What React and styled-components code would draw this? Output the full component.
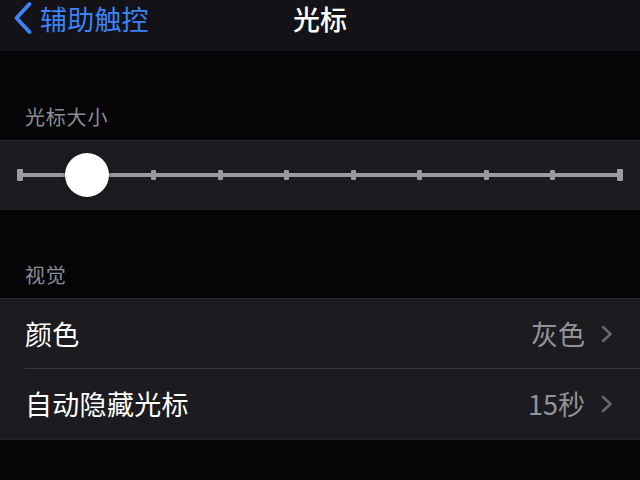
import React from "react";
import styled, { createGlobalStyle } from "styled-components";

const Global = createGlobalStyle`
  html, body { margin: 0; padding: 0; background: #050407; }
  body { font-family: "Noto Sans CJK SC", "Noto Sans", sans-serif; }
  * { box-sizing: border-box; }
`;

const Page = styled.div`
  width: 640px;
  height: 480px;
  background: #050407;
  overflow: hidden;
`;

const NavBar = styled.div`
  position: relative;
  height: 51px;
  background: #131216;
  display: flex;
  align-items: flex-start;
`;

const BackButton = styled.div`
  display: flex;
  align-items: flex-start;
  gap: 6px;
  padding-left: 12px;
  color: #3b83f6;
  font-size: 27px;
  line-height: 38px;
  letter-spacing: 0.2px;
  svg { margin-top: 1px; }
`;

const NavTitle = styled.div`
  position: absolute;
  left: 0;
  right: 0;
  top: 0;
  text-align: center;
  color: #ffffff;
  font-size: 27px;
  font-weight: 500;
  line-height: 38px;
  pointer-events: none;
`;

const SectionHeader = styled.div`
  height: ${(p) => p.$h || 88}px;
  padding: ${(p) => (p.$h || 88) - 34}px 0 0 25px;
  color: #8d8c92;
  font-size: 20px;
  line-height: 22px;
  letter-spacing: 0.8px;
`;

const Group = styled.div`
  background: #1c1b1f;
  border-top: 1px solid #2a292e;
  border-bottom: 1px solid #232227;
`;

const SliderWrap = styled.div`
  height: 68px;
  padding: 0 17px;
  display: flex;
  align-items: center;
`;

const Track = styled.div`
  position: relative;
  flex: 1;
  height: 12px;
  display: flex;
  align-items: center;
  justify-content: space-between;
  &::before {
    content: "";
    position: absolute;
    left: 2px;
    right: 2px;
    top: 4px;
    height: 4px;
    background: #9b9a9f;
  }
`;

const Tick = styled.div`
  position: relative;
  width: ${(p) => (p.$end ? 6 : 5)}px;
  height: ${(p) => (p.$end ? 12 : 10)}px;
  background: #9b9a9f;
  border-radius: 1px;
`;

const Thumb = styled.div`
  position: absolute;
  left: ${(p) => p.$left}px;
  top: 50%;
  width: 44px;
  height: 44px;
  margin-left: -22px;
  margin-top: -22px;
  border-radius: 50%;
  background: #ffffff;
  box-shadow: 0 1px 4px rgba(0, 0, 0, 0.4);
`;

const Row = styled.div`
  padding-left: 25px;
`;

const RowInner = styled.div`
  height: 70px;
  display: flex;
  align-items: center;
  justify-content: space-between;
  padding-right: 27px;
  border-bottom: ${(p) => (p.$last ? "none" : "1px solid #38373c")};
`;

const Label = styled.div`
  color: #ffffff;
  font-size: 27px;
  line-height: 30px;
  letter-spacing: 0.3px;
`;

const Value = styled.div`
  display: flex;
  align-items: center;
  gap: 16px;
  color: #949399;
  font-size: 27px;
  line-height: 30px;
`;

const Chevron = () => (
  <svg width="12" height="18" viewBox="0 0 12 18">
    <path d="M2 2 L9.5 9 L2 16" fill="none" stroke="#68676c" strokeWidth="2.6" strokeLinecap="round" strokeLinejoin="round" />
  </svg>
);

const BackChevron = () => (
  <svg width="22" height="34" viewBox="0 0 22 34">
    <path d="M17.5 3 L4.5 17 L17.5 31" fill="none" stroke="#3b83f6" strokeWidth="4" strokeLinecap="round" strokeLinejoin="round" />
  </svg>
);

const ticks = Array.from({ length: 10 }, (_, i) => i);

export default function App() {
  return (
    <Page>
      <Global />
      <NavBar>
        <BackButton>
          <BackChevron />
          <span>辅助触控</span>
        </BackButton>
        <NavTitle>光标</NavTitle>
      </NavBar>

      <SectionHeader $h={89}>光标大小</SectionHeader>
      <Group>
        <SliderWrap>
          <Track>
            {ticks.map((i) => (
              <Tick key={i} $end={i === 0 || i === ticks.length - 1} />
            ))}
            <Thumb $left={70} />
          </Track>
        </SliderWrap>
      </Group>

      <SectionHeader $h={88}>视觉</SectionHeader>
      <Group>
        <Row>
          <RowInner>
            <Label>颜色</Label>
            <Value>
              <span>灰色</span>
              <Chevron />
            </Value>
          </RowInner>
        </Row>
        <Row>
          <RowInner $last>
            <Label>自动隐藏光标</Label>
            <Value>
              <span>15秒</span>
              <Chevron />
            </Value>
          </RowInner>
        </Row>
      </Group>
    </Page>
  );
}
